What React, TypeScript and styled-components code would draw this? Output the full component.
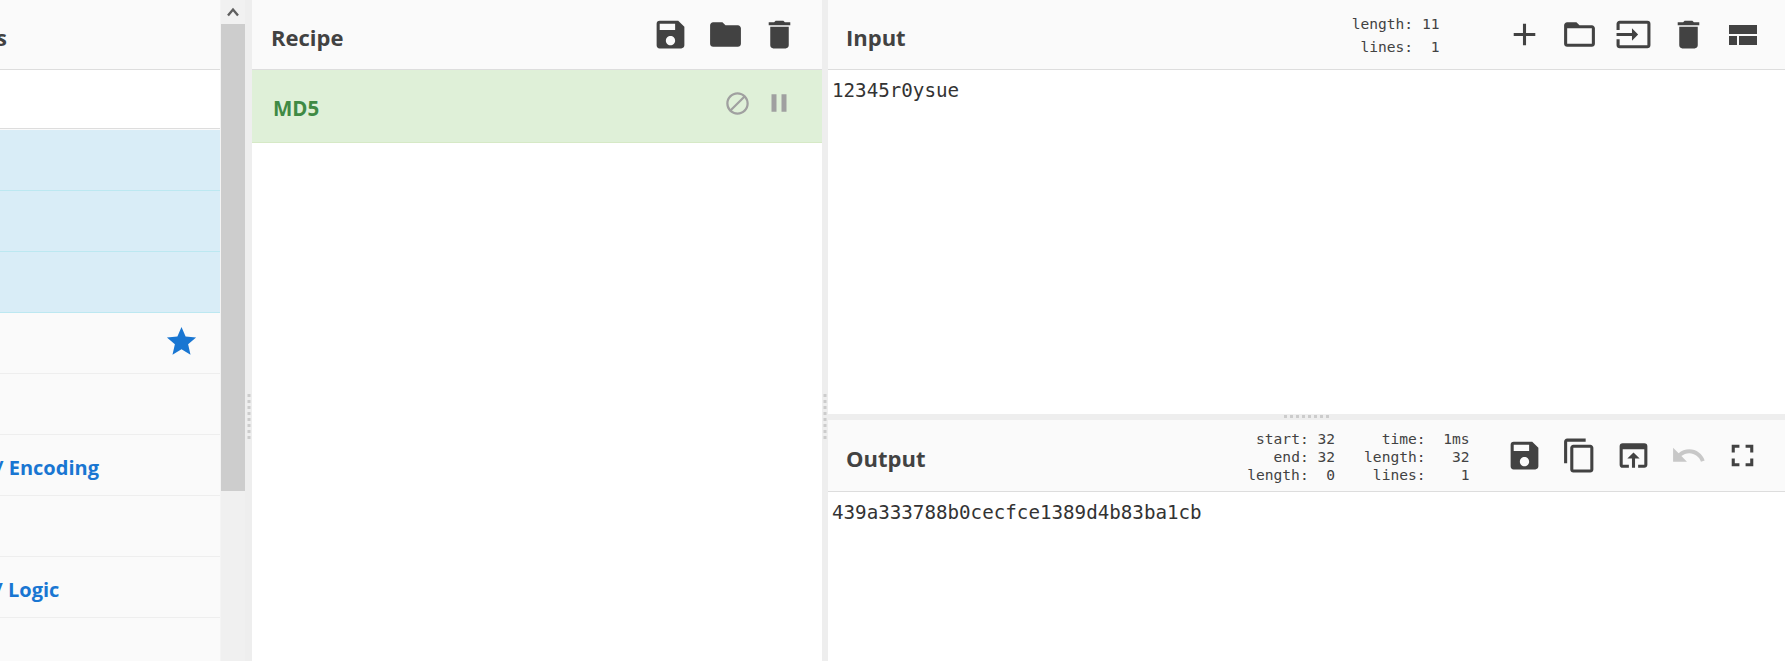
import React from 'react';
import styled, { createGlobalStyle } from 'styled-components';
import {
  MdAdd,
  MdBlock,
  MdContentCopy,
  MdDelete,
  MdFolder,
  MdFolderOpen,
  MdFullscreen,
  MdInput,
  MdOpenInBrowser,
  MdPause,
  MdSave,
  MdStar,
  MdUndo,
} from 'react-icons/md';

const GlobalStyle = createGlobalStyle`
  html, body {
    margin: 0;
    padding: 0;
    background: #fff;
  }
`;

const Page = styled.div`
  display: grid;
  grid-template-columns: 221px 24px 7px 570px 6px 1fr;
  width: 1785px;
  height: 661px;
  overflow: hidden;
  font-family: 'Open Sans', 'Noto Sans', sans-serif;
  color: #424242;
`;

const Operations = styled.div`
  overflow: hidden;
  background: #fafafa;
  border-right: 1px solid #f4f4f4;
`;

/* the panel is scrolled sideways, so the first part of each label is off screen */
const OperationsInner = styled.div`
  width: 358px;
  margin-left: -138px;
`;

const Header = styled.div<{ $height: number }>`
  display: flex;
  align-items: center;
  box-sizing: border-box;
  height: ${(p) => p.$height}px;
  background: #fafafa;
  border-bottom: 1px solid #ddd;
`;

const Title = styled.h2<{ $left: number }>`
  margin: 5px auto 0 ${(p) => p.$left}px;
  font-size: 22px;
  font-weight: 700;
  line-height: 30px;
`;

const Search = styled.div`
  box-sizing: border-box;
  height: 59px;
  background: #fff;
  border-bottom: 1px solid #ddd;
  margin-bottom: 1px;
`;

const Category = styled.div<{ $active?: boolean }>`
  display: flex;
  align-items: center;
  box-sizing: border-box;
  height: 61px;
  padding-left: 20px;
  padding-right: 21px;
  font-size: 20px;
  font-weight: 700;
  color: #1976d2;
  background: ${(p) => (p.$active ? '#d9edf7' : '#fafafa')};
  border-bottom: 1px solid ${(p) => (p.$active ? '#bce8f1' : '#eee')};

  svg {
    margin: -4px 0 0 auto;
  }
`;

const CategoryName = styled.span`
  margin-top: 4px;
  white-space: nowrap;
`;

const Track = styled.div`
  background: #f0f0f0;
`;

const TrackButton = styled.div`
  display: flex;
  align-items: center;
  justify-content: center;
  height: 24px;
  background: #f1f1f1;
`;

const Thumb = styled.div`
  height: 467px;
  background: #cdcdcd;
`;

const Gutter = styled.div`
  position: relative;
  background: #eee;
`;

/* grip dots sit on top of the gutter */
const Grip = styled.div<{ $top: number }>`
  position: absolute;
  left: 50%;
  top: ${(p) => p.$top}px;
  width: 3px;
  height: 46px;
  transform: translateX(-50%);
  background: repeating-linear-gradient(to bottom, #ccc 0 3px, transparent 3px 6px);
`;

const Recipe = styled.div`
  display: flex;
  flex-direction: column;
  background: #fff;
`;

const Tools = styled.div<{ $gap?: number }>`
  display: flex;
  align-items: center;
  margin-left: ${(p) => p.$gap ?? 0}px;
  margin-right: 15px;
`;

const ToolButton = styled.div<{ $disabled?: boolean }>`
  display: flex;
  align-items: center;
  justify-content: center;
  width: 54.5px;
  height: 44px;
  color: ${(p) => (p.$disabled ? '#c8c8c8' : '#424242')};
`;

const Operation = styled.div`
  display: flex;
  align-items: center;
  box-sizing: border-box;
  height: 73px;
  padding-left: 21px;
  padding-right: 22px;
  background: #dff0d8;
  border-bottom: 1px solid #d6e9c6;
`;

const OperationName = styled.div`
  margin: 4px auto 0 0;
  font-size: 20.5px;
  font-weight: 700;
  color: #3f8a44;
`;

const OperationToggle = styled.div`
  display: flex;
  align-items: center;
  justify-content: center;
  width: 42px;
  margin-top: -6px;
  color: #a0a0a0;
`;

const Side = styled.div`
  display: flex;
  flex-direction: column;
  min-width: 0;
`;

const Pane = styled.div<{ $height: number }>`
  box-sizing: border-box;
  height: ${(p) => p.$height}px;
  background: #fff;
  padding: 9px 0 0 4px;
  font-family: 'DejaVu Sans Mono', 'Liberation Mono', monospace;
  font-size: 19.2px;
  line-height: 24px;
  color: #333;
`;

const HSplit = styled.div`
  position: relative;
  height: 6px;
  background: #eee;
`;

const HGrip = styled.div`
  position: absolute;
  left: 456px;
  top: 1px;
  width: 46px;
  height: 3px;
  background: repeating-linear-gradient(to right, #ccc 0 3px, transparent 3px 6px);
`;

const Stats = styled.div`
  display: flex;
  gap: 29px;
  margin-top: 2px;
`;

const StatColumn = styled.pre<{ $lineHeight: number }>`
  margin: 0;
  text-align: right;
  font-family: 'DejaVu Sans Mono', 'Liberation Mono', monospace;
  font-size: 14.6px;
  line-height: ${(p) => p.$lineHeight}px;
  color: #424242;
`;

const LayoutIcon = () => (
  <svg width="28" height="20" viewBox="0 0 28 20" fill="currentColor">
    <rect x="0" y="0" width="28" height="9" />
    <rect x="0" y="11" width="8" height="9" />
    <rect x="10" y="11" width="18" height="9" />
  </svg>
);

const ChevronUp = () => (
  <svg width="12" height="10" viewBox="0 0 12 10" fill="none" stroke="#5f5f5f" strokeWidth="2.4">
    <path d="M1 8.5 L6 2.5 L11 8.5" />
  </svg>
);

export default function App() {
  return (
    <Page>
      <GlobalStyle />
      <Operations>
        <OperationsInner>
          <Header $height={70}>
            <Title $left={22}>Operations</Title>
          </Header>
          <Search />
          <Category $active />
          <Category $active />
          <Category $active />
          <Category>
            <MdStar size={35} />
          </Category>
          <Category />
          <Category>
            <CategoryName>Encryption / Encoding</CategoryName>
          </Category>
          <Category />
          <Category>
            <CategoryName>Arithmetic / Logic</CategoryName>
          </Category>
          <Category />
        </OperationsInner>
      </Operations>

      <Track>
        <TrackButton>
          <ChevronUp />
        </TrackButton>
        <Thumb />
      </Track>

      <Gutter>
        <Grip $top={394} />
      </Gutter>

      <Recipe>
        <Header $height={70}>
          <Title $left={19}>Recipe</Title>
          <Tools>
            <ToolButton><MdSave size={37} /></ToolButton>
            <ToolButton><MdFolder size={37} /></ToolButton>
            <ToolButton><MdDelete size={37} /></ToolButton>
          </Tools>
        </Header>
        <Operation>
          <OperationName>MD5</OperationName>
          <OperationToggle><MdBlock size={27} /></OperationToggle>
          <OperationToggle><MdPause size={30} /></OperationToggle>
        </Operation>
      </Recipe>

      <Gutter>
        <Grip $top={394} />
      </Gutter>

      <Side>
        <Header $height={70}>
          <Title $left={18}>Input</Title>
          <StatColumn $lineHeight={23}>{'length: 11\n lines:  1'}</StatColumn>
          <Tools $gap={58}>
            <ToolButton><MdAdd size={37} /></ToolButton>
            <ToolButton><MdFolderOpen size={37} /></ToolButton>
            <ToolButton><MdInput size={37} /></ToolButton>
            <ToolButton><MdDelete size={37} /></ToolButton>
            <ToolButton><LayoutIcon /></ToolButton>
          </Tools>
        </Header>
        <Pane $height={344}>12345r0ysue</Pane>
        <HSplit>
          <HGrip />
        </HSplit>
        <Header $height={72}>
          <Title $left={18}>Output</Title>
          <Stats>
            <StatColumn $lineHeight={18}>{'start: 32\n  end: 32\nlength:  0'}</StatColumn>
            <StatColumn $lineHeight={18}>{'time:  1ms\nlength:   32\nlines:    1'}</StatColumn>
          </Stats>
          <Tools $gap={28}>
            <ToolButton><MdSave size={37} /></ToolButton>
            <ToolButton><MdContentCopy size={37} /></ToolButton>
            <ToolButton><MdOpenInBrowser size={37} /></ToolButton>
            <ToolButton $disabled><MdUndo size={37} /></ToolButton>
            <ToolButton><MdFullscreen size={37} /></ToolButton>
          </Tools>
        </Header>
        <Pane $height={169}>439a333788b0cecfce1389d4b83ba1cb</Pane>
      </Side>
    </Page>
  );
}
